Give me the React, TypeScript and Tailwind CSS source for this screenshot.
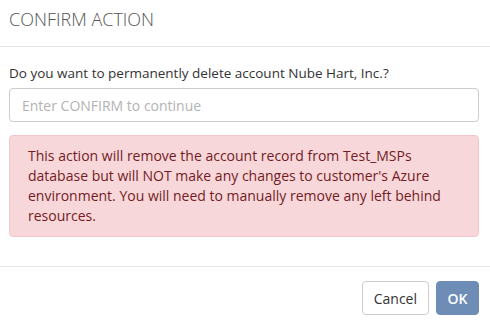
import { useState } from "react"

export default function App() {
  const [value, setValue] = useState("")

  return (
    <div className="h-[323px] w-[490px] bg-white font-['Open_Sans',_'Liberation_Sans',_sans-serif] text-[14px] text-[#333]">
      <div className="border-b border-[#e5e5e5] pb-[14px] pl-[9px] pr-[11px] pt-[6px]">
        <h4 className="text-[18px] font-light leading-[26px] text-[#555]">CONFIRM ACTION</h4>
      </div>

      <div className="pb-[29px] pl-[9px] pr-[11px] pt-[16px]">
        <p className="mb-[5px] text-[13.5px] leading-[20px]">Do you want to permanently delete account Nube Hart, Inc.?</p>
        <input
          value={value}
          onChange={(event) => setValue(event.target.value)}
          placeholder="Enter CONFIRM to continue"
          className="block h-[34px] w-full rounded-[4px] border border-[#ccc] px-[12px] text-[14px] text-[#555] outline-none placeholder:text-[#b3b3b3]"
        />
        <div className="mt-[13px] rounded-[4px] border border-[#f5c6cb] bg-[#f8d7da] px-[18px] py-[10px] leading-[20px] text-[#721c24]">
          This action will remove the account record from Test_MSPs database but will NOT make any changes to
          customer's Azure environment. You will need to manually remove any left behind resources.
        </div>
      </div>

      <div className="flex justify-end gap-[7px] border-t border-[#e5e5e5] pl-[9px] pr-[11px] pt-[14px]">
        <button
          type="button"
          className="h-[34px] rounded-[4px] border border-[#ccc] bg-white px-[11px] text-[14px] text-[#333]"
        >
          Cancel
        </button>
        <button
          type="button"
          className="h-[34px] w-[43px] rounded-[4px] border border-[#6e8db6] bg-[#6e8db6] text-[14px] font-semibold text-white"
        >
          OK
        </button>
      </div>
    </div>
  )
}
